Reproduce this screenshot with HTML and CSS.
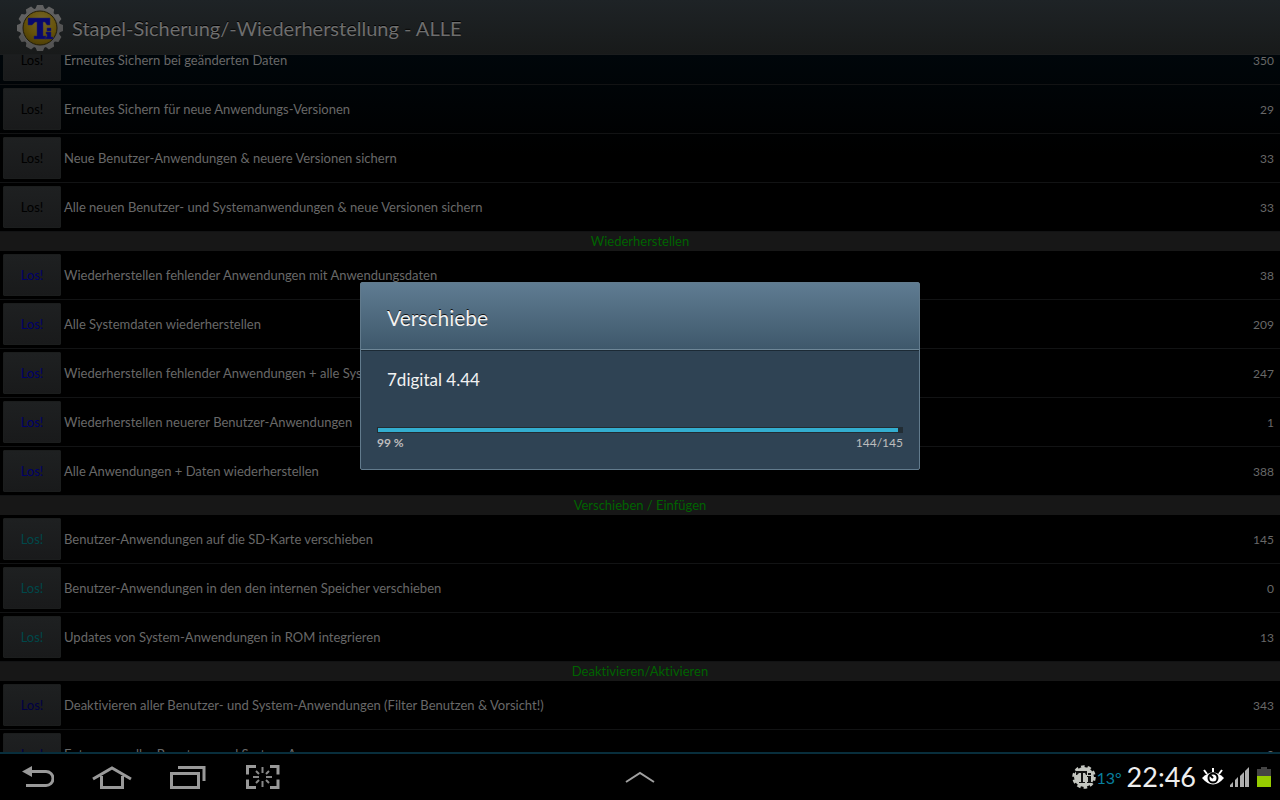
FILE: index.html
```html
<!DOCTYPE html>
<html lang="de">
<head>
<meta charset="utf-8">
<meta name="viewport" content="width=device-width, initial-scale=1">
<title>Stapel-Sicherung/-Wiederherstellung</title>
<link rel="stylesheet" href="styles.css">
</head>
<body>
<div class="screen">
  <header class="topbar">
    <svg class="logo" viewBox="0 0 48 48" aria-hidden="true">
      <defs>
        <linearGradient id="gear" x1="0" y1="0" x2="1" y2="1"><stop offset="0" stop-color="#686868"/><stop offset="1" stop-color="#4c4c4c"/></linearGradient>
        <radialGradient id="gold" cx=".55" cy=".3" r=".8"><stop offset="0" stop-color="#75662c"/><stop offset=".55" stop-color="#665209"/><stop offset="1" stop-color="#443705"/></radialGradient>
      </defs>
      <g fill="url(#gear)">
        <circle cx="24" cy="24" r="20"/>
        <path d="M21 1h6l2 5H19zM21 47h6l2-5H19zM1 21v6l5 2V19zM47 21v6l-5 2V19z"/>
        <path d="M21 1h6l2 5H19zM21 47h6l2-5H19zM1 21v6l5 2V19zM47 21v6l-5 2V19z" transform="rotate(30 24 24)"/>
        <path d="M21 1h6l2 5H19zM21 47h6l2-5H19zM1 21v6l5 2V19zM47 21v6l-5 2V19z" transform="rotate(60 24 24)"/>
      </g>
      <circle cx="24" cy="24" r="17" fill="url(#gold)" stroke="#211c08" stroke-width="1"/>
      <path d="M12 14h22v7h-3l-2-3h-2v14h3v3H18v-3h3V18h-2l-3 3h-4zM31 24h4v3h-4zM30 28h5v5h2v2h-8v-2h2v-3h-1z" fill="#08086c" stroke="#24245c" stroke-width=".5"/>
    </svg>
    <h1 class="title">Stapel-Sicherung/-Wiederherstellung - ALLE</h1>
  </header>

  <main class="content">
    <div class="list">
      <div class="row"><button class="go" type="button">Los!</button><span class="label">Erneutes Sichern bei geänderten Daten</span><span class="count">350</span></div>
      <div class="row"><button class="go" type="button">Los!</button><span class="label">Erneutes Sichern für neue Anwendungs-Versionen</span><span class="count">29</span></div>
      <div class="row"><button class="go" type="button">Los!</button><span class="label">Neue Benutzer-Anwendungen &amp; neuere Versionen sichern</span><span class="count">33</span></div>
      <div class="row"><button class="go" type="button">Los!</button><span class="label">Alle neuen Benutzer- und Systemanwendungen &amp; neue Versionen sichern</span><span class="count">33</span></div>
      <h2 class="section">Wiederherstellen</h2>
      <div class="row"><button class="go go-blue" type="button">Los!</button><span class="label">Wiederherstellen fehlender Anwendungen mit Anwendungsdaten</span><span class="count">38</span></div>
      <div class="row"><button class="go go-blue" type="button">Los!</button><span class="label">Alle Systemdaten wiederherstellen</span><span class="count">209</span></div>
      <div class="row"><button class="go go-blue" type="button">Los!</button><span class="label">Wiederherstellen fehlender Anwendungen + alle Systemdaten</span><span class="count">247</span></div>
      <div class="row"><button class="go go-blue" type="button">Los!</button><span class="label">Wiederherstellen neuerer Benutzer-Anwendungen</span><span class="count">1</span></div>
      <div class="row"><button class="go go-blue" type="button">Los!</button><span class="label">Alle Anwendungen + Daten wiederherstellen</span><span class="count">388</span></div>
      <h2 class="section">Verschieben / Einfügen</h2>
      <div class="row"><button class="go go-teal" type="button">Los!</button><span class="label">Benutzer-Anwendungen auf die SD-Karte verschieben</span><span class="count">145</span></div>
      <div class="row"><button class="go go-teal" type="button">Los!</button><span class="label">Benutzer-Anwendungen in den den internen Speicher verschieben</span><span class="count">0</span></div>
      <div class="row"><button class="go go-teal" type="button">Los!</button><span class="label">Updates von System-Anwendungen in ROM integrieren</span><span class="count">13</span></div>
      <h2 class="section">Deaktivieren/Aktivieren</h2>
      <div class="row"><button class="go go-navy" type="button">Los!</button><span class="label">Deaktivieren aller Benutzer- und System-Anwendungen (Filter Benutzen &amp; Vorsicht!)</span><span class="count">343</span></div>
      <div class="row"><button class="go go-navy" type="button">Los!</button><span class="label">Entsperren aller Benutzer- und System-Apps</span><span class="count">0</span></div>
    </div>
  </main>

  <div class="overlay">
    <section class="dialog" role="dialog" aria-labelledby="dialog-title">
      <h2 class="dialog-title" id="dialog-title">Verschiebe</h2>
      <div class="dialog-body">
        <p class="message">7digital 4.44</p>
        <div class="track" role="progressbar" aria-label="Fortschritt" aria-valuemin="0" aria-valuemax="145" aria-valuenow="144"><div class="fill" style="width:99.3%"></div></div>
        <div class="figures"><span class="percent">99 %</span><span>144/145</span></div>
      </div>
    </section>
  </div>
</div>

<nav class="navbar">
  <div class="nav-buttons">
    <button class="nav" type="button" aria-label="Zurück"><svg width="32" height="24" viewBox="0 0 32 24"><path d="M8 6.500h16a7 7 0 0 1 0 14H4" fill="none" stroke="#999" stroke-width="3"/><path d="M0 6.500 10 1v11z" fill="#999"/></svg></button>
    <button class="nav" type="button" aria-label="Startseite"><svg width="40" height="24" viewBox="0 0 40 24"><path d="M1 14 20 3l19 11M9.500 11v11.500h21V11" fill="none" stroke="#999" stroke-width="3"/></svg></button>
    <button class="nav" type="button" aria-label="Letzte Anwendungen"><svg width="36" height="24" viewBox="0 0 36 24"><path d="M1.500 8.500h27v14h-27zM8 2.500h26V16" fill="none" stroke="#999" stroke-width="3"/></svg></button>
    <button class="nav" type="button" aria-label="Bildschirmfoto"><svg width="36" height="26" viewBox="-1 0 36 26"><path d="M11 2.500H2.500v8M25 2.500h8v8M11 23.500H2.500v-8M25 23.500h8v-8" fill="none" stroke="#999" stroke-width="3"/><path d="M17.500 3v6M17.500 17v6M8 13h6M21 13h6M11 7l3 3M24 7l-3 3M11 19l3-3M24 19l-3-3" fill="none" stroke="#888" stroke-width="2"/></svg></button>
  </div>
  <button class="nav" type="button" aria-label="Leiste öffnen"><svg width="30" height="14" viewBox="0 0 30 14"><path d="M1 12 15 3l14 9" fill="none" stroke="#a0a0a0" stroke-width="2"/></svg></button>
  <div class="status">
    <svg width="24" height="24" viewBox="0 0 24 24" aria-hidden="true"><circle cx="12" cy="12" r="10" fill="#c4c6c0"/><circle cx="12" cy="12" r="10.500" fill="none" stroke="#c4c6c0" stroke-width="2.500" stroke-dasharray="3.600 2.998"/><path d="M4 6h11v4h-1l-1-2h-2v9h2v1H7v-1h2V8H7l-2 2H4zM16 8h3v2h-3zM15 11h4v6h1v1h-5v-1h1v-5h-1z" fill="#111"/></svg>
    <span class="temp">13°</span>
    <time class="clock">22:46</time>
    <svg width="24" height="20" viewBox="0 0 24 20" aria-hidden="true"><path d="M1 11q11-11 22 0-11 13-22 0z" fill="#fff"/><circle cx="12" cy="11" r="4.500" fill="#fff" stroke="#000" stroke-width="2"/><path d="m9 8 3 3" stroke="#000" stroke-width="2"/><path d="M12 1v4M3 3l3 4M21 3l-3 4" stroke="#fff" stroke-width="2"/></svg>
    <svg width="20" height="20" viewBox="0 0 20 20" aria-hidden="true"><path d="M0 20v-2l3-3v5zM5 20v-7l3-3v10zM10 20V9l4-4v15zM15 20V4l4-4v20z" fill="#b0b0b0"/></svg>
    <svg class="battery" width="14" height="20" viewBox="0 0 14 20" aria-hidden="true"><path d="M4 0h6v2h4v8H0V2h4z" fill="#444"/><path d="M0 9h14v11H0z" fill="#96cc00"/></svg>
  </div>
</nav>
</body>
</html>
```
FILE: styles.css
```css
* {
  box-sizing: border-box;
}

body {
  margin: 0;
  height: 100vh;
  display: flex;
  flex-direction: column;
  overflow: hidden;
  background: #000;
  color: #686868;
  font-family: "Choco Cooky", Lato, sans-serif;
  font-size: 13px;
  font-variant-ligatures: none;
}

h1,
h2,
p {
  margin: 0;
  font-weight: 400;
}

button {
  border: 0;
  padding: 0;
  background: none;
  font: inherit;
}

svg {
  display: block;
}

.screen {
  position: relative;
  flex: 1;
  min-height: 0;
  display: flex;
  flex-direction: column;
}

.topbar {
  flex: none;
  height: 55px;
  display: flex;
  align-items: center;
  gap: 8px;
  padding: 2px 16px 0;
  background: linear-gradient(#1e2326, #181a1a);
  border-bottom: 1px solid #1b1d1e;
}

.logo {
  width: 48px;
  height: 48px;
}

.title {
  font-size: 20px;
  line-height: 28px;
  color: #6e6e6e;
  text-shadow: 0 -1px 0 #000;
}

.content {
  flex: 1;
  min-height: 0;
  overflow: hidden;
  background: linear-gradient(#00060a, #000 100px);
}

.list {
  margin-top: -19px;
}

.row {
  height: 49px;
  display: flex;
  align-items: center;
  padding: 0 6px 0 3px;
  border-bottom: 1px solid #121314;
}

.go {
  width: 58px;
  height: 42px;
  margin-right: 3px;
  background: linear-gradient(#1e2021, #191a1b);
  border: 1px solid #1b1d1d;
  border-radius: 1px;
  color: #000;
}

.go-blue {
  color: #000069;
}

.go-teal {
  color: #00484a;
}

.go-navy {
  color: #000044;
}

.label {
  flex: 1;
}

.count {
  font-size: 12px;
}

.section {
  height: 19px;
  background: #171717;
  color: #006300;
  font-size: 13px;
  line-height: 19px;
  text-align: center;
}

.overlay {
  position: absolute;
  inset: 0;
  display: flex;
  align-items: center;
  justify-content: center;
}

.dialog {
  width: 560px;
  max-width: 100%;
  background: #2f4354;
  border: 1px solid #627b8d;
  border-radius: 2px;
  color: #f2f2f2;
}

.dialog-title {
  height: 67px;
  padding: 0 26px;
  background: linear-gradient(#5f7c92, #3e586b);
  border-bottom: 1px solid #6e8797;
  font-size: 21px;
  line-height: 69px;
  text-shadow: 0 -1px 0 #111;
}

.dialog-body {
  padding: 16px 16px;
  border-top: 1px solid #1c2a35;
}

.message {
  padding: 0 10px;
  font-size: 17px;
  line-height: 26px;
}

.track {
  height: 6px;
  margin-top: 34px;
  padding: 1px;
  background: #222d34;
}

.fill {
  height: 4px;
  background: #33aed0;
}

.figures {
  display: flex;
  justify-content: space-between;
  color: #bdbdbd;
  font-size: 12px;
  line-height: 20px;
}

.percent {
  font-weight: 700;
}

.navbar {
  flex: none;
  height: 48px;
  display: grid;
  grid-template-columns: 1fr auto 1fr;
  align-items: center;
  border-top: 2px solid #082e3c;
  background: #000;
}

.nav-buttons {
  display: flex;
  align-items: center;
  gap: 38px;
  padding-left: 22px;
}

.status {
  display: flex;
  align-items: center;
  justify-content: flex-end;
  gap: 5px;
  padding-right: 9px;
}

.temp {
  margin-left: -5px;
  color: #087f9e;
  font-size: 16px;
}

.clock {
  color: #eee;
  font-size: 27px;
  line-height: 40px;
}

.battery {
  margin-left: 2px;
}
```
